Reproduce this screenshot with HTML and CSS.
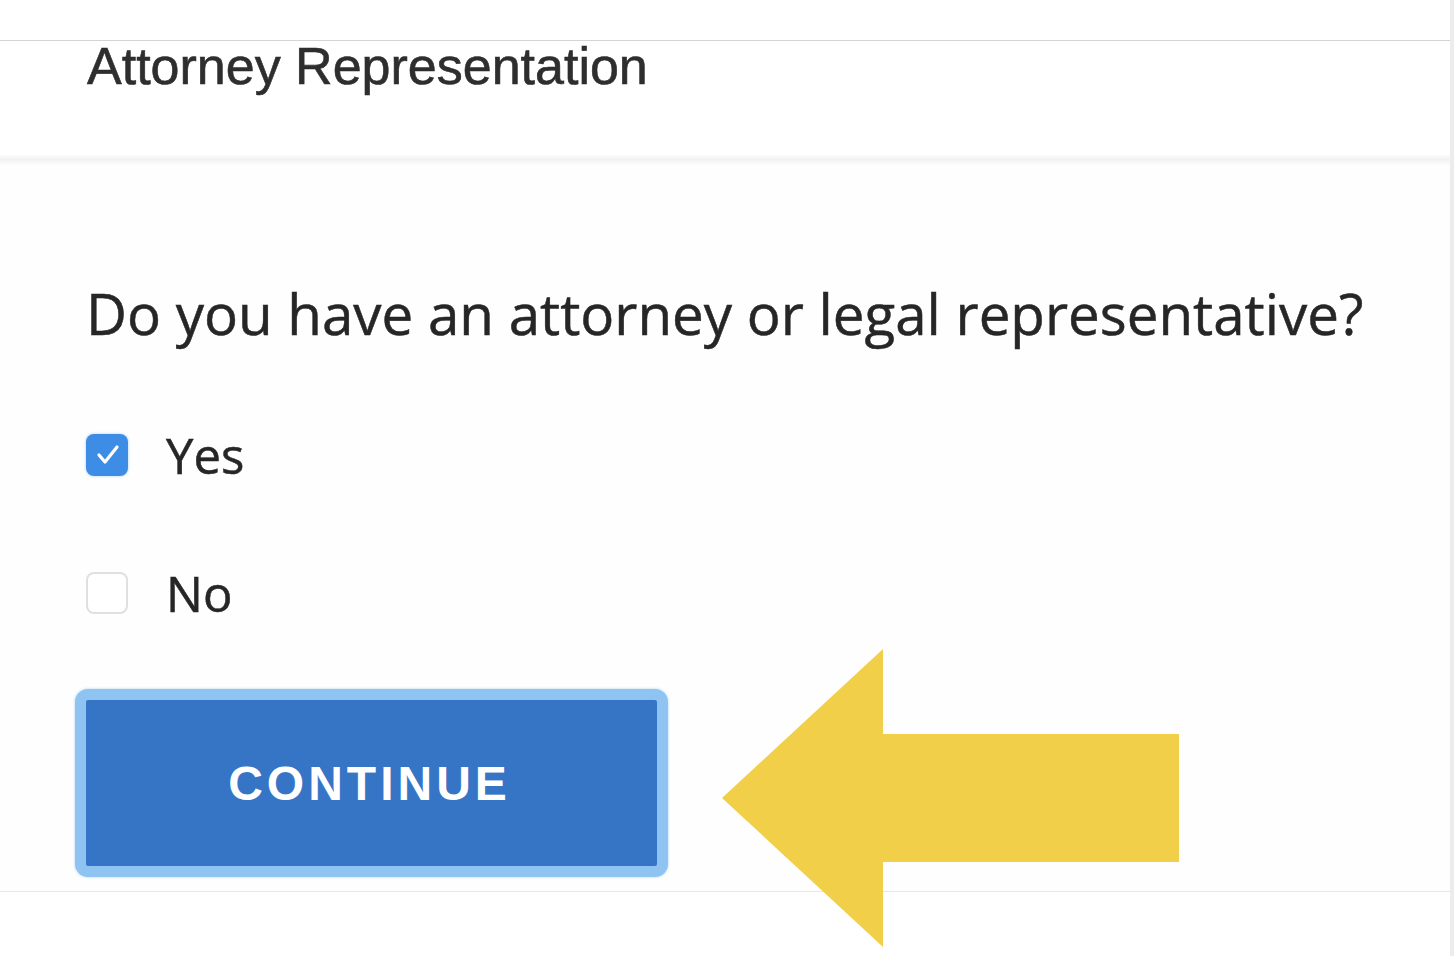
FILE: index.html
```html
<!DOCTYPE html>
<html lang="en">
<head>
<meta charset="utf-8">
<title>Attorney Representation</title>
<link rel="stylesheet" href="styles.css">
</head>
<body>
<div class="page">
  <div class="main">
    <div class="topbar"></div>
    <header class="header">
      <h1 class="title">Attorney Representation</h1>
    </header>
    <div class="header-shadow"></div>
    <section class="content">
      <p class="question">Do you have an attorney or legal representative?</p>
      <div class="options">
        <label class="option">
          <span class="box box-checked">
            <svg viewBox="0 0 42 42" width="42" height="42" aria-hidden="true"><path d="M13 21 L19 28 L31 13" fill="none" stroke="#ffffff" stroke-width="3.2" stroke-linecap="round" stroke-linejoin="round"/></svg>
          </span>
          <span class="option-label">Yes</span>
        </label>
        <label class="option">
          <span class="box"></span>
          <span class="option-label">No</span>
        </label>
      </div>
      <button class="continue" type="button">CONTINUE</button>
    </section>
    <footer class="footer"></footer>
  </div>
  <div class="edge"></div>
  <svg class="pointer" viewBox="0 0 458 298" width="458" height="298" aria-hidden="true">
    <polygon points="0,149 161,0 161,85 457,85 457,213 161,213 161,298" fill="#f2cf48"/>
  </svg>
</div>
</body>
</html>
```

FILE: styles.css
```css
html, body {
  margin: 0;
  padding: 0;
  background: #ffffff;
}

body {
  font-family: "Liberation Sans", Arial, sans-serif;
  color: #2b2b2b;
}

.page {
  position: relative;
  display: flex;
  width: 1454px;
  height: 956px;
  overflow: hidden;
}

.main {
  flex: 1;
  display: flex;
  flex-direction: column;
  background: #ffffff;
}

.edge {
  width: 4px;
  background: #ececec;
}

.topbar {
  height: 40px;
  background: #ffffff;
}

.header {
  border-top: 1px solid #d4d4d4;
  padding: 1px 0 0 87px;
  box-sizing: border-box;
  height: 115px;
  background: #ffffff;
}

.title {
  margin: 0;
  font-size: 52px;
  line-height: 48px;
  font-weight: normal;
  color: #2e2e2e;
  -webkit-text-stroke: 0.6px #2e2e2e;
}

.header-shadow {
  height: 10px;
  background: linear-gradient(to bottom, #fcfcfc 0%, #f2f2f2 45%, #fcfcfc 100%);
}

.content {
  background: #fefefe;
  padding: 117px 0 14px 86px;
  display: flex;
  flex-direction: column;
  align-items: flex-start;
}

.question {
  margin: 0;
  font-family: "Open Sans", "Liberation Sans", Arial, sans-serif;
  font-size: 56.5px;
  line-height: 64px;
  font-weight: normal;
  color: #262626;
  -webkit-text-stroke: 0.5px #262626;
}

.options {
  display: flex;
  flex-direction: column;
  gap: 96px;
  margin-top: 88px;
}

.option {
  display: flex;
  align-items: center;
  gap: 38px;
  height: 42px;
}

.box {
  width: 42px;
  height: 42px;
  box-sizing: border-box;
  border: 2px solid #e0e0e0;
  border-radius: 8px;
  background: #ffffff;
  display: block;
}

.box-checked {
  border: none;
  background: #3d8de6;
  box-shadow: 0 0 3px rgba(61, 141, 230, 0.45);
}

.box svg {
  display: block;
}

.option-label {
  font-family: "Open Sans", "Liberation Sans", Arial, sans-serif;
  font-size: 49px;
  line-height: 42px;
  font-weight: normal;
  color: #262626;
  -webkit-text-stroke: 0.5px #262626;
}

.continue {
  margin: 75px 0 0 -11px;
  width: 593px;
  height: 188px;
  box-sizing: border-box;
  border: 11px solid #8fc3f1;
  border-radius: 13px;
  background: #3674c6;
  box-shadow: 0 0 3px rgba(143, 195, 241, 0.7);
  color: #ffffff;
  font-family: "Liberation Sans", Arial, sans-serif;
  font-weight: bold;
  font-size: 48px;
  letter-spacing: 4px;
  padding: 0 4px 0 0;
  cursor: pointer;
}

.footer {
  flex: 1;
  border-top: 1px solid #e6e6e6;
  background: #ffffff;
}

.pointer {
  position: absolute;
  left: 722px;
  top: 649px;
  display: block;
}
```
